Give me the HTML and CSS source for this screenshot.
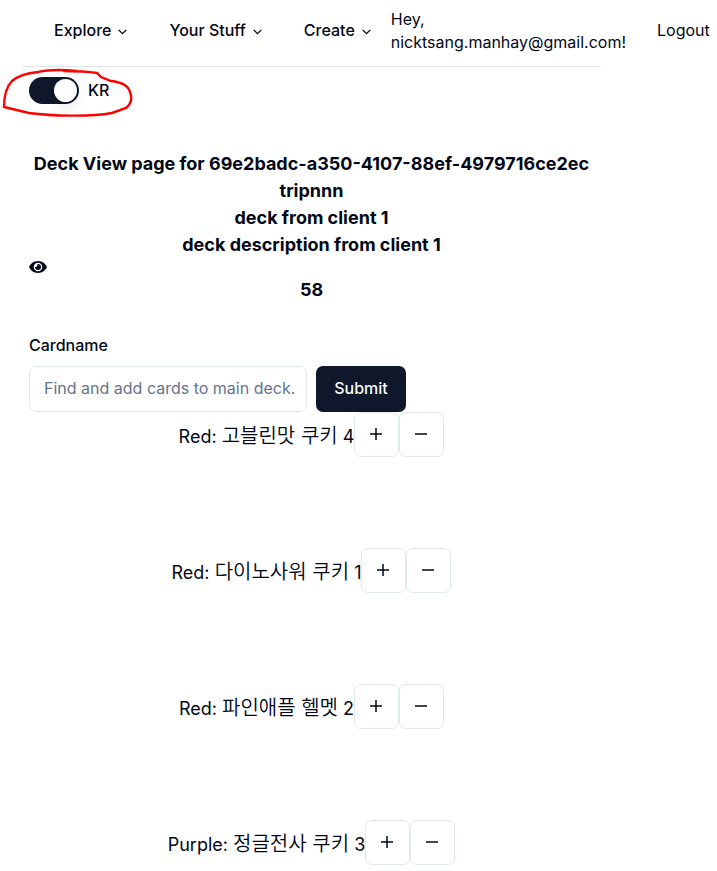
FILE: index.html
```html
<!DOCTYPE html>
<html lang="en">
<head>
<meta charset="utf-8">
<meta name="viewport" content="width=device-width, initial-scale=1">
<title>Deck View</title>
<link rel="stylesheet" href="styles.css">
</head>
<body>
<div class="page">
  <header class="nav">
    <button class="menu" type="button">Explore <svg class="chevron" viewBox="0 0 24 24"><path d="m5 9 7 7 7-7"/></svg></button>
    <button class="menu" type="button">Your Stuff <svg class="chevron" viewBox="0 0 24 24"><path d="m5 9 7 7 7-7"/></svg></button>
    <button class="menu" type="button">Create <svg class="chevron" viewBox="0 0 24 24"><path d="m5 9 7 7 7-7"/></svg></button>
    <p class="greeting">Hey,<br>nicktsang.manhay@gmail.com!</p>
    <a class="logout" href="#">Logout</a>
  </header>
  <main class="content">
    <div class="language">
      <input class="switch" type="checkbox" role="switch" id="language" checked>
      <label for="language">KR</label>
      <svg class="marker" viewBox="0 0 136 54" aria-hidden="true"><path d="M63 4C73 4 84 4 97 6L101 10L111 14C121 15 128 18 130 25C133 32 131 37 126 41L112 46C90 50 52 49 29 46L4 40C4 29 6 20 12 14C19 8 28 6 38 5C51 2 67 3 77 4"/></svg>
    </div>
    <section class="deck">
      <h1>Deck View page for 69e2badc-a350-4107-88ef-4979716ce2ec</h1>
      <h2>tripnnn</h2>
      <h2>deck from client 1</h2>
      <h2>deck description from client 1</h2>
      <svg class="eye" viewBox="0 0 18 14" role="img" aria-label="Visible"><path fill-rule="evenodd" d="M9 1C4.500 1 1.500 3.800 0 7c1.500 3.200 4.500 6 9 6s7.500-2.800 9-6c-1.500-3.200-4.500-6-9-6Zm0 1.700a4.300 4.300 0 1 1 0 8.600 4.300 4.300 0 0 1 0-8.600Z"/><path d="M9 4a3 3 0 1 1-3 3c1.500.4 2.800-.8 2.300-2.700Z"/></svg>
      <h2>58</h2>
    </section>
    <form class="add-card">
      <label for="cardname">Cardname</label>
      <div class="fields">
        <input class="text" type="text" id="cardname" placeholder="Find and add cards to main deck.">
        <button class="submit" type="button">Submit</button>
      </div>
    </form>
    <ul class="cards">
      <li><span class="card">Red: <span lang="ko">고블린맛 쿠키</span> 4</span><button class="step" type="button" aria-label="Add"><svg viewBox="0 0 18 18"><path d="M3 9h12M9 3v12"/></svg></button><button class="step" type="button" aria-label="Remove"><svg viewBox="0 0 18 18"><path d="M3 9h12"/></svg></button></li>
      <li><span class="card">Red: <span lang="ko">다이노사워 쿠키</span> 1</span><button class="step" type="button" aria-label="Add"><svg viewBox="0 0 18 18"><path d="M3 9h12M9 3v12"/></svg></button><button class="step" type="button" aria-label="Remove"><svg viewBox="0 0 18 18"><path d="M3 9h12"/></svg></button></li>
      <li><span class="card">Red: <span lang="ko">파인애플 헬멧</span> 2</span><button class="step" type="button" aria-label="Add"><svg viewBox="0 0 18 18"><path d="M3 9h12M9 3v12"/></svg></button><button class="step" type="button" aria-label="Remove"><svg viewBox="0 0 18 18"><path d="M3 9h12"/></svg></button></li>
      <li><span class="card">Purple: <span lang="ko">정글전사 쿠키</span> 3</span><button class="step" type="button" aria-label="Add"><svg viewBox="0 0 18 18"><path d="M3 9h12M9 3v12"/></svg></button><button class="step" type="button" aria-label="Remove"><svg viewBox="0 0 18 18"><path d="M3 9h12"/></svg></button></li>
    </ul>
  </main>
</div>
</body>
</html>
```
FILE: styles.css
```css
* { box-sizing: border-box; }
body {
  margin: 0;
  background: #fff;
  color: #020817;
  font: 18px/27px Inter, "Noto Sans CJK KR", sans-serif;
}
h1, h2, p, ul { margin: 0; padding: 0; }
button, input { font: inherit; color: inherit; }
.page { margin: 0 116px 0 22px; }

.nav {
  display: flex;
  align-items: center;
  height: 67px;
  padding: 0 0 5px 14px;
  border-bottom: 1px solid #e4e4e7;
  font-size: 16px;
  line-height: 23px;
  white-space: nowrap;
}
.menu {
  display: flex;
  flex: none;
  align-items: center;
  gap: 5px;
  padding: 0 18px;
  margin-right: 4px;
  border: 0;
  background: none;
  font-weight: 500;
}
.chevron {
  width: 13px;
  height: 13px;
  margin-top: 2px;
  fill: none;
  stroke: currentColor;
  stroke-width: 2.5;
}
.greeting { flex: none; margin-left: -4px; }
.logout { flex: none; margin-left: 31px; color: inherit; text-decoration: none; }

.content { padding: 0 7px; }
.language {
  position: relative;
  display: flex;
  align-items: center;
  gap: 9px;
  height: 47px;
  font-size: 16px;
  font-weight: 500;
}
.switch {
  appearance: none;
  display: flex;
  justify-content: flex-end;
  width: 50px;
  height: 27px;
  margin: 0;
  padding: 2px;
  border-radius: 14px;
  background: #0f172a;
}
.switch::before {
  content: "";
  width: 23px;
  height: 23px;
  border-radius: 50%;
  background: #fff;
  box-shadow: 0 10px 15px -3px rgba(0, 0, 0, .1);
}
.marker {
  position: absolute;
  top: 0;
  left: -29px;
  width: 136px;
  height: 54px;
  fill: none;
  stroke: #f00;
  stroke-width: 2.4;
  pointer-events: none;
}

.deck { margin-top: 36px; text-align: center; }
.deck h1, .deck h2 { font-size: 18px; font-weight: 700; white-space: nowrap; }
.eye { display: block; width: 18px; height: 18px; fill: currentColor; }

.add-card { margin-top: 32px; font-size: 16px; }
.add-card label { display: block; line-height: 20px; font-weight: 500; }
.fields { display: flex; gap: 9px; margin-top: 11px; }
.text {
  width: 278px;
  height: 46px;
  padding: 0 4px 2px 14px;
  border: 1px solid #e2e8f0;
  border-radius: 7px;
  background: #fff;
}
.text::placeholder { color: #64748b; }
.submit {
  width: 90px;
  height: 46px;
  padding: 0 0 2px;
  border: 0;
  border-radius: 7px;
  background: #0f172a;
  color: #f8fafc;
  font-weight: 500;
}

.cards { list-style: none; }
.cards li {
  display: flex;
  align-items: flex-start;
  justify-content: center;
  white-space: nowrap;
}
.cards li + li { margin-top: 89px; }
.card { height: 47px; line-height: 45px; padding-top: 2px; }
.card [lang="ko"] { font-size: 20px; font-weight: 350; line-height: 27px; }
.step {
  display: grid;
  place-items: center;
  width: 45px;
  height: 45px;
  padding: 0 1px 1px 0;
  border: 1px solid #e2e8f0;
  border-radius: 7px;
  background: #fff;
}
.step svg { width: 18px; height: 18px; stroke: currentColor; stroke-width: 1.5; }
```
